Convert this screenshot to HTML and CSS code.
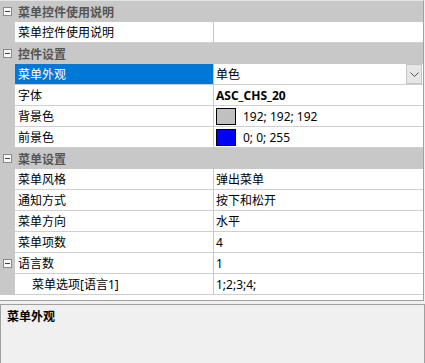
FILE: index.html
```html
<!DOCTYPE html>
<html lang="zh-CN">

<head>
    <meta charset="UTF-8" />
    <title>属性</title>
    <link rel="stylesheet" href="styles.css">
</head>

<body>
    <div class="grid">
        <div class="row cat">
            <span class="gutter"><i class="toggle"></i></span>
            <span class="cat-name">菜单控件使用说明</span>
        </div>
        <div class="row">
            <span class="gutter"></span>
            <span class="name">菜单控件使用说明</span>
            <span class="value"></span>
        </div>

        <div class="row cat">
            <span class="gutter"><i class="toggle"></i></span>
            <span class="cat-name">控件设置</span>
        </div>
        <div class="row selected">
            <span class="gutter"></span>
            <span class="name">菜单外观</span>
            <span class="value">单色<span class="drop"><svg width="9" height="5" viewBox="0 0 9 5"><path d="M0.5 0.5 L4.5 4.5 L8.5 0.5" fill="none" stroke="#555" stroke-width="1"/></svg></span></span>
        </div>
        <div class="row">
            <span class="gutter"></span>
            <span class="name">字体</span>
            <span class="value bold">ASC_CHS_20</span>
        </div>
        <div class="row">
            <span class="gutter"></span>
            <span class="name">背景色</span>
            <span class="value"><i class="swatch silver"></i>192; 192; 192</span>
        </div>
        <div class="row">
            <span class="gutter"></span>
            <span class="name">前景色</span>
            <span class="value"><i class="swatch blue"></i>0; 0; 255</span>
        </div>

        <div class="row cat">
            <span class="gutter"><i class="toggle"></i></span>
            <span class="cat-name">菜单设置</span>
        </div>
        <div class="row">
            <span class="gutter"></span>
            <span class="name">菜单风格</span>
            <span class="value">弹出菜单</span>
        </div>
        <div class="row">
            <span class="gutter"></span>
            <span class="name">通知方式</span>
            <span class="value">按下和松开</span>
        </div>
        <div class="row">
            <span class="gutter"></span>
            <span class="name">菜单方向</span>
            <span class="value">水平</span>
        </div>
        <div class="row">
            <span class="gutter"></span>
            <span class="name">菜单项数</span>
            <span class="value">4</span>
        </div>
        <div class="row">
            <span class="gutter"><i class="toggle"></i></span>
            <span class="name">语言数</span>
            <span class="value">1</span>
        </div>
        <div class="row">
            <span class="gutter"></span>
            <span class="name child">菜单选项[语言1]</span>
            <span class="value">1;2;3;4;</span>
        </div>
        <div class="tail"></div>
    </div>

    <div class="help">
        <div class="help-title">菜单外观</div>
    </div>
</body>

</html>
```

FILE: styles.css
```css
body {
    margin: 0;
    font-family: "Noto Sans", "Noto Sans CJK SC", sans-serif;
    font-size: 12px;
    background-color: #f0f0f0;
    width: 425px;
    height: 363px;
    overflow: hidden;
}

.grid {
    width: 423px;
    background-color: white;
    border-top: 1px solid #e4e4e4;
    border-right: 1px solid #a0a0a0;
    border-bottom: 1px solid #a0a0a0;
}

.row {
    display: flex;
    height: 21px;
}

.gutter {
    width: 15px;
    flex: none;
    background-color: #c8c8c8;
    display: flex;
    align-items: center;
    justify-content: center;
}

.toggle {
    display: block;
    width: 7px;
    height: 7px;
    border: 1px solid #8a8a8a;
    background: linear-gradient(#444, #444) center / 5px 1px no-repeat, #f8f8f8;
}

.cat {
    background-color: #c8c8c8;
}

.cat-name {
    padding: 2px 0 0 3px;
    line-height: 19px;
    font-weight: bold;
    color: #555;
}

.name {
    width: 195px;
    flex: none;
    padding: 2px 0 0 3px;
    line-height: 18px;
    border-bottom: 1px solid #cfcfcf;
    color: black;
    white-space: nowrap;
}

.name.child {
    padding-left: 17px;
    width: 181px;
}

.value {
    flex: 1;
    display: flex;
    align-items: center;
    padding-left: 2px;
    border-left: 1px solid #c8c8c8;
    border-bottom: 1px solid #cfcfcf;
    color: black;
    position: relative;
}

.bold {
    font-weight: bold;
}

.selected .name {
    background-color: #0078d7;
    color: white;
}

.drop {
    position: absolute;
    right: 1px;
    top: 0;
    width: 16px;
    height: 20px;
    box-sizing: border-box;
    border: 1px solid #c4c4c4;
    background-color: #e6e6e6;
    display: flex;
    align-items: center;
    justify-content: center;
}

.swatch {
    display: block;
    width: 18px;
    height: 15px;
    border: 1px solid black;
    margin-right: 7px;
}

.swatch.silver {
    background-color: #c0c0c0;
}

.swatch.blue {
    background-color: #0000ff;
}

.tail {
    height: 5px;
}

.help {
    margin-top: 3px;
    height: 58px;
    width: 423px;
    border: 1px solid #a0a0a0;
    border-bottom: none;
    background-color: #f0f0f0;
}

.help-title {
    padding: 2px 0 0 6px;
    line-height: 20px;
    font-weight: bold;
    color: black;
}
```
